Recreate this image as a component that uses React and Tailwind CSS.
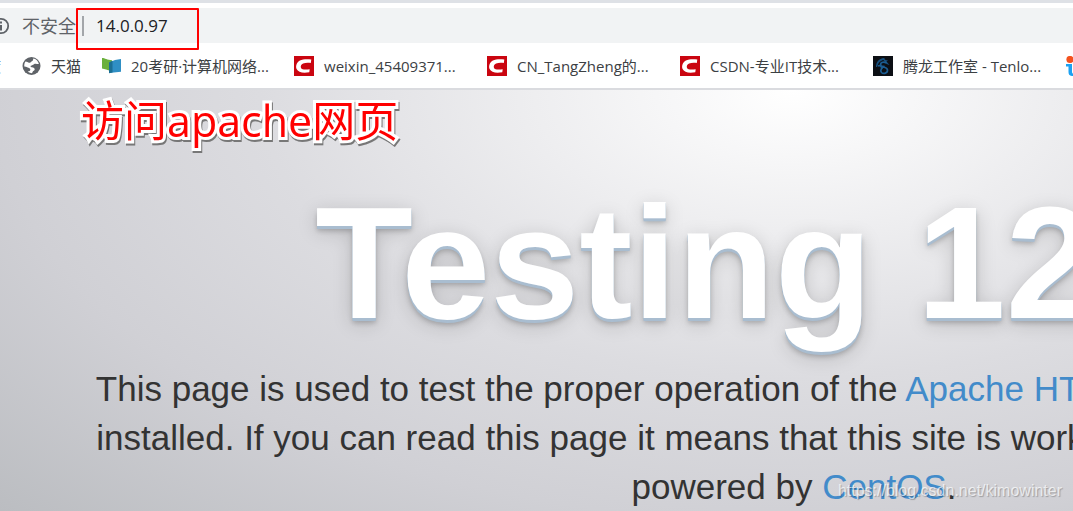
const GlobeIcon = () => (
  <svg viewBox="0 0 20 20" className="h-5 w-5 shrink-0">
    <circle cx="10.500" cy="10" r="9" fill="#5f6368" />
    <path
      d="M4.500 5.600c1.600.2 2.400 1 3.600 1.200 1.400.2 1.600-1.200 2.800-1.600 1.200-.3 1.200-1.400 1.400-2.600 2.600.4 5 2.600 5.600 5.400-1.400.2-2.600-.6-4.200-.2-1.200.4-1.600 1.400-3 1.600-1.600.2-1.400 1.600 0 1.800 2 .2 3.200.8 3 2.400-.2 1.200-1.600 1.200-2 2.200-.2.6-.4 1-.8 1.400-1-.2-2.800-.6-4.200-1.800 1.600-.2 2.800-.6 2.600-2-.2-1.200-1.600-1.200-2.600-1.800-1.200-.6-2.200-.8-3.400-1-.2-1.800.2-3.600 1.200-5z"
      fill="#fff"
    />
  </svg>
);

const BookIcon = () => (
  <svg viewBox="0 0 20 20" className="h-5 w-5 shrink-0">
    <path d="M1 2c3 0 5 2 10 2.200V14.500C7 15 4 13 1 12.600z" fill="#6ab03c" />
    <path d="M8 6.500 14 4l6.500-1.200v13L8 17z" fill="#2f8fc4" />
    <path d="M8 6.500 11.500 4.700v11.800L8 17.300z" fill="#1c6f94" />
  </svg>
);

const CsdnIcon = () => (
  <svg viewBox="0 0 20 20" className="h-5 w-5 shrink-0">
    <rect width="20" height="20" fill="#ca0510" />
    <path
      d="M17.300 3.600c-3.800-.6-8.600-.5-11.400 1C2.500 6.400 1.400 10.500 2.600 13.100c1.500 3.400 6.500 4.300 12.700 3.200l.4-3.100c-4.200.7-7.800.6-8.700-1.300-.7-1.700.3-3.500 2.100-4.300 1.900-.8 4.900-.9 7.700-.5z"
      fill="#fff"
    />
  </svg>
);

const DragonIcon = () => (
  <svg viewBox="0 0 20 20" className="h-5 w-5 shrink-0">
    <rect width="20" height="20" fill="#0c0f14" />
    <path
      d="M3 11c0-5 3-8.500 8-9l1.500 1.500C8 4 5 6.500 4.200 11zM10 3.500l5 1-1.500 1 3 3.500-3-1"
      fill="#17507f"
    />
    <path
      d="M13.500 7C10 5 6.500 7 8 9.500c1.200 1.800 6.200 1.500 6.500 4.500.3 3-4 4.500-6 2.500-2-2.200.5-5 3-6.500M5 10c2-1 3 0 3.500 1.500"
      fill="none"
      stroke="#1b5d92"
      strokeWidth="1.700"
    />
  </svg>
);

const ItIcon = () => (
  <svg viewBox="0 0 20 20" className="h-5 w-5 shrink-0">
    <circle cx="4" cy="3.500" r="3.600" fill="#f4511e" />
    <path
      d="M0 8h6v8c0 1.500 1 2 3 2v2C4 20.500 2.500 19 2.500 16v-5.500H0z"
      fill="#1ba1f2"
    />
  </svg>
);

const bookmarks = [
  { label: "20考研·计算机网络...", icon: BookIcon },
  { label: "weixin_45409371...", icon: CsdnIcon },
  { label: "CN_TangZheng的...", icon: CsdnIcon },
  { label: "CSDN-专业IT技术...", icon: CsdnIcon },
  { label: "腾龙工作室 - Tenlo...", icon: DragonIcon },
];

const AddressBar = () => (
  <div className="border-t-[3px] border-[#dee1e6] bg-white pt-[5px]">
    <div className="flex h-[35px] items-center overflow-hidden bg-[#f1f3f4] text-[#5f6368]">
      <div className="flex w-[10px] shrink-0 justify-end">
        <svg viewBox="0 0 18 18" className="h-[18px] w-[18px] shrink-0">
          <circle cx="9" cy="9" r="7.200" fill="none" stroke="#5f6368" strokeWidth="1.800" />
          <path d="M8 4.500h2v2H8zM8 8h2v5.500H8z" fill="#5f6368" />
        </svg>
      </div>
      <span className="ml-3 shrink-0 text-lg">不安全</span>
      <span className="ml-1.5 h-5 w-0.5 shrink-0 bg-[#a3a6aa]"></span>
      <input
        type="text"
        aria-label="地址"
        defaultValue="14.0.0.97"
        className="ml-3 min-w-0 flex-1 bg-transparent text-[17px] text-[#202124] outline-none"
      />
    </div>
  </div>
);

const BookmarkBar = () => (
  <nav className="flex h-[47px] items-center gap-5 overflow-hidden border-b-2 border-[#dadbdf] bg-white pt-px text-[15px] text-[#3c4043]">
    <a href="#" className="flex w-px shrink-0 justify-end overflow-hidden whitespace-nowrap">
      百度
    </a>
    <a href="#" className="flex shrink-0 items-center gap-2.5">
      <GlobeIcon />
      天猫
    </a>
    {bookmarks.map(({ label, icon: Icon }) => (
      <a key={label} href="#" className="flex shrink-0 items-center gap-2.5">
        <Icon />
        <span className="w-[143px] whitespace-nowrap">{label}</span>
      </a>
    ))}
    <a href="#" aria-label="IT" className="shrink-0">
      <ItIcon />
    </a>
  </nav>
);

const TestPage = () => (
  <main className="overflow-hidden bg-[radial-gradient(ellipse_1110px_600px_at_793px_0px,#ffffff_0%,#dcdce0_48%,#d0d0d5_72%,#bbbdc1_100%)] pl-20 font-['Liberation_Sans',Arial,sans-serif]">
    <div className="w-[1428px] pt-[77px] pb-8 text-center text-[#333]">
      <h1 className="mb-[5px] text-[160px] leading-[192px] font-bold text-white [text-shadow:0_1px_0_#a9bdd0,0_2px_0_#a9bdd0,0_3px_0_#a9bdd0,0_5px_5px_rgba(0,0,0,0.2),0_5px_20px_rgba(0,0,0,0.18)]">
        Testing 123..
      </h1>
      <p className="text-[35px] leading-[49px]">
        This page is used to test the proper operation of the{" "}
        <a href="#" className="text-[#428bca]">Apache HTTP server</a> after it has been
        installed. If you can read this page it means that this site is working properly.
        This server is powered by{" "}
        <a href="#" className="text-[#428bca]">CentOS</a>.
      </p>
    </div>
  </main>
);

const App = () => {
  return (
    <div className="relative h-screen overflow-hidden bg-[#c6c6cb] font-['Open_Sans','Noto_Sans_CJK_SC',sans-serif]">
      <AddressBar />
      <BookmarkBar />
      <TestPage />

      {/* notes drawn over the browser window */}
      <div className="absolute top-2 left-[76px] h-[42px] w-[123px] rounded-[1px] border-2 border-[#f00]"></div>
      <p className="absolute top-[92px] left-[81px] text-[43px] leading-[58px] whitespace-nowrap text-[#f00] [paint-order:stroke_fill] [-webkit-text-stroke:6px_white] drop-shadow-[1px_2px_0_#777]">
        访问apache网页
      </p>
      <p className="absolute right-[11px] bottom-2 font-['Liberation_Sans',Arial,sans-serif] text-base text-white/70 [text-shadow:1px_1px_1px_rgba(0,0,0,0.25)]">
        https://blog.csdn.net/kimowinter
      </p>
    </div>
  );
};

export default App;
